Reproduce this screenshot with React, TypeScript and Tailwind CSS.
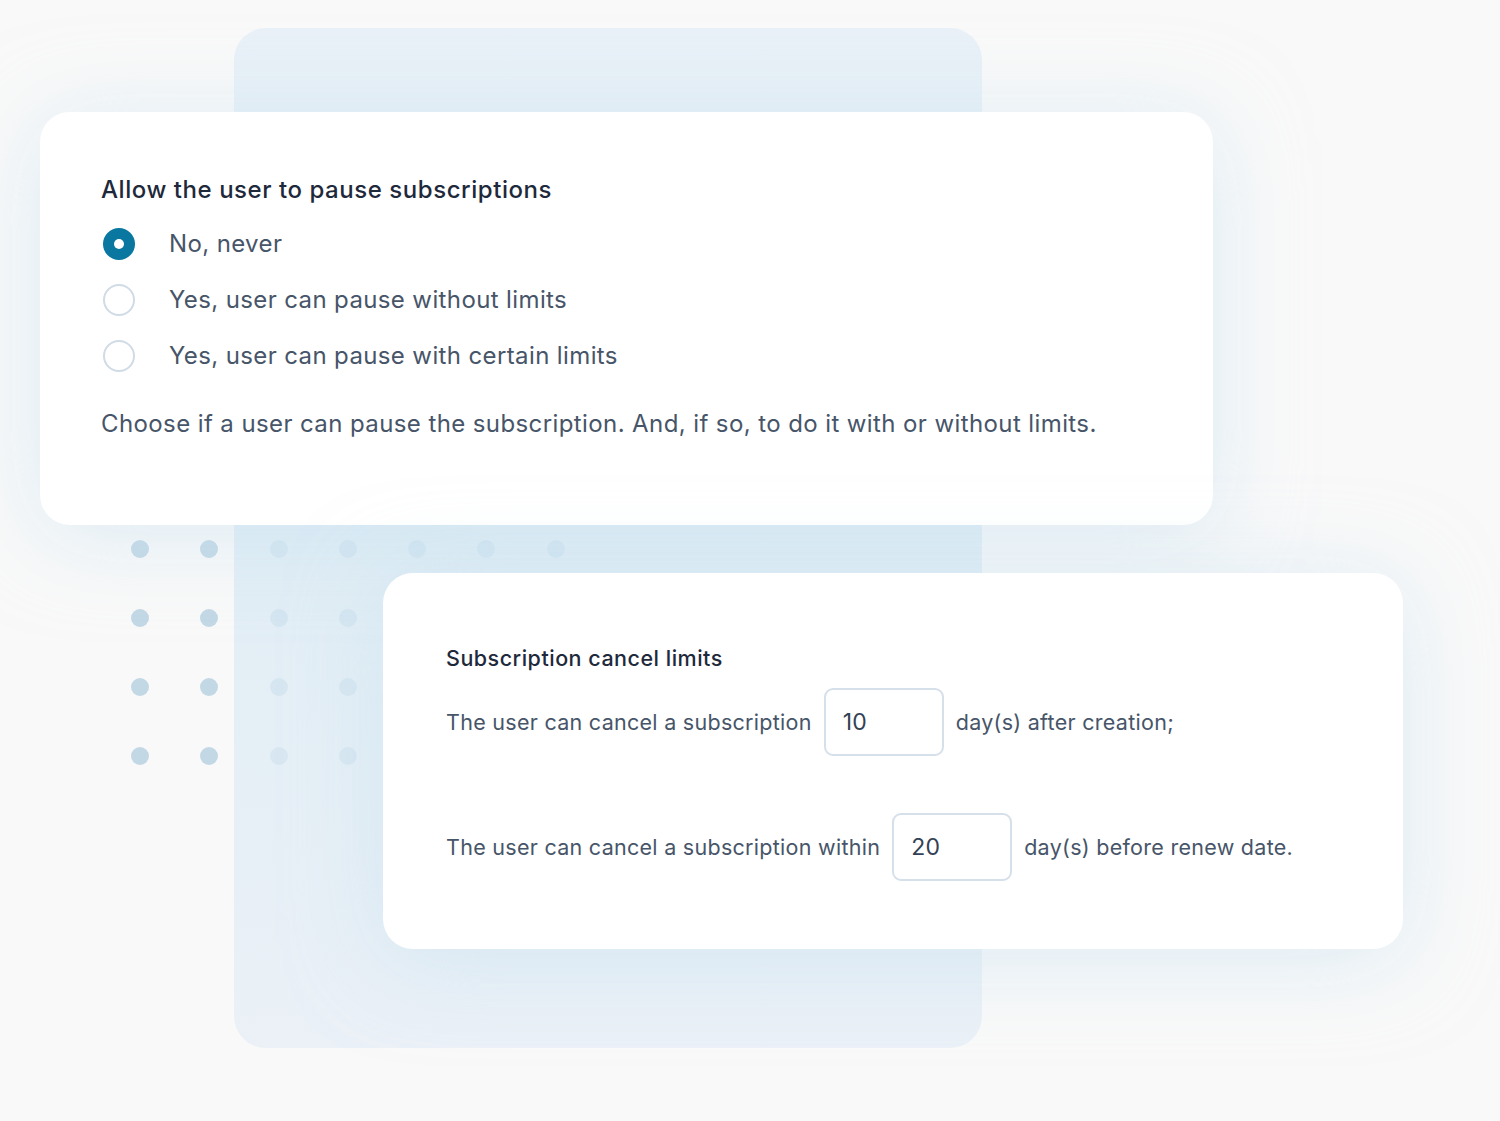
import React from 'react';

const options = [
  { label: 'No, never', checked: true },
  { label: 'Yes, user can pause without limits', checked: false },
  { label: 'Yes, user can pause with certain limits', checked: false },
];

const Radio = ({ checked }: { checked: boolean }) =>
  checked ? (
    <span className="flex h-[32px] w-[32px] items-center justify-center rounded-full bg-[#0a77a1]">
      <span className="h-[10px] w-[10px] rounded-full bg-white" />
    </span>
  ) : (
    <span className="h-[32px] w-[32px] rounded-full border-2 border-[#d0dbe6] bg-white" />
  );

const DayInput = ({ value }: { value: string }) => (
  <div className="flex h-[68px] w-[120px] items-center rounded-[9px] border-2 border-[#d6e0ea] bg-white pl-[17px] text-[23px] tracking-[0.3px] text-[#334155]">
    {value}
  </div>
);

export default function App() {
  return (
    <div
      className="relative h-[1121px] w-[1500px] overflow-hidden bg-[#f9f9f9]"
      style={{ fontFamily: 'Inter, "Noto Sans", sans-serif' }}
    >
      {/* dot grid, sits under the panel */}
      <div className="absolute left-[131px] top-[540px] grid grid-cols-[repeat(7,18px)] gap-x-[51.3px] gap-y-[51px]">
        {Array.from({ length: 28 }).map((_, i) => (
          <span key={i} className="h-[18px] w-[18px] rounded-full bg-[#c3d8e5]" />
        ))}
      </div>

      {/* backdrop panel */}
      <div className="absolute left-[234px] top-[28px] h-[1020px] w-[748px] rounded-[32px] bg-gradient-to-b from-[#e4eef7]/75 via-[#d9eaf4]/75 to-[#e6eef6]/75" />

      {/* pause card */}
      <div className="absolute left-[40px] top-[112px] h-[413px] w-[1173px] rounded-[30px] bg-white pl-[61px] pt-[64px] shadow-[0_10px_90px_rgba(196,224,240,0.55)]">
        <h2 className="h-[28px] text-[24px] leading-[28px] font-medium tracking-[0.55px] text-[#1e293b]">
          Allow the user to pause subscriptions
        </h2>
        <div className="mt-[12px] flex flex-col">
          {options.map((o) => (
            <label key={o.label} className="flex h-[56px] items-center">
              <span className="ml-[2px] flex w-[66px]">
                <Radio checked={o.checked} />
              </span>
              <span className="text-[24px] tracking-[0.38px] text-[#475569]">{o.label}</span>
            </label>
          ))}
        </div>
        <p className="mt-[24px] text-[24px] leading-[32px] tracking-[0.4px] text-[#475569]">
          Choose if a user can pause the subscription. And, if so, to do it with or without limits.
        </p>
      </div>

      {/* cancel limits card */}
      <div className="absolute left-[383px] top-[573px] h-[376px] w-[1020px] rounded-[30px] bg-white pl-[63px] pt-[71px] shadow-[0_10px_90px_rgba(196,224,240,0.55)]">
        <h2 className="h-[28px] text-[21.5px] leading-[28px] font-medium tracking-[0.5px] text-[#1e293b]">
          Subscription cancel limits
        </h2>
        <div className="mt-[16px] flex flex-col gap-[57px]">
          <div className="flex items-center gap-[12px] text-[21.5px] tracking-[0.28px] text-[#475569]">
            <span>The user can cancel a subscription</span>
            <DayInput value="10" />
            <span>day(s) after creation;</span>
          </div>
          <div className="flex items-center gap-[12px] text-[21.5px] tracking-[0.28px] text-[#475569]">
            <span>The user can cancel a subscription within</span>
            <DayInput value="20" />
            <span>day(s) before renew date.</span>
          </div>
        </div>
      </div>
    </div>
  );
}
